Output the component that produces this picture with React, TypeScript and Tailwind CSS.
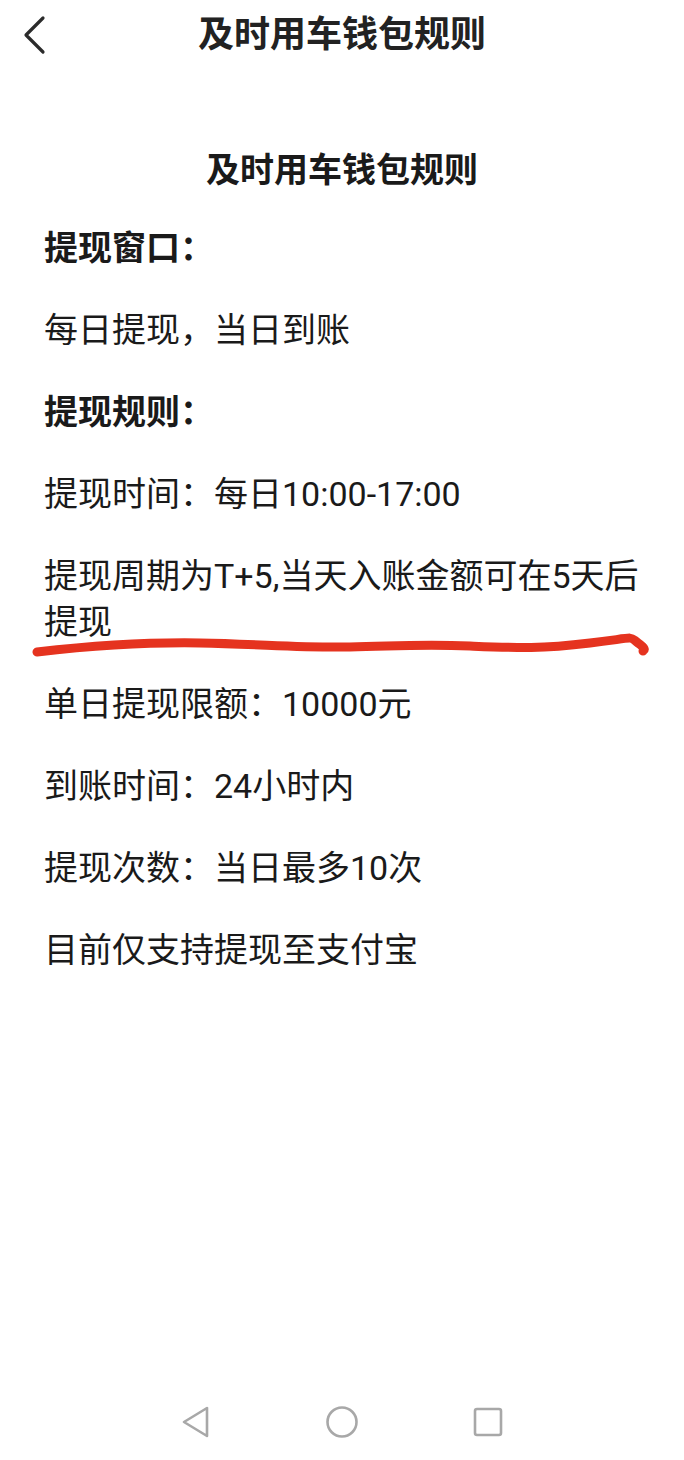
import React from 'react';

const FONT = { fontFamily: 'Roboto, "Noto Sans CJK SC", "Noto Sans", sans-serif' };

type Rule = { text: string; bold?: boolean; marked?: boolean };

const RULES: Rule[] = [
  { text: '提现窗口：', bold: true },
  { text: '每日提现，当日到账' },
  { text: '提现规则：', bold: true },
  { text: '提现时间：每日10:00-17:00' },
  { text: '提现周期为T+5,当天入账金额可在5天后提现', marked: true },
  { text: '单日提现限额：10000元' },
  { text: '到账时间：24小时内' },
  { text: '提现次数：当日最多10次' },
  { text: '目前仅支持提现至支付宝' },
];

// hand-drawn red underline, coords are page coords
const Scribble: React.FC = () => (
  <svg
    className="absolute left-[-44px] top-[75px] w-[684px] h-[34px] pointer-events-none"
    viewBox="0 628 684 34"
    fill="none"
  >
    <path
      d="M37 652 C 90 646, 140 642, 200 643 S 300 648, 350 647 S 420 644, 470 646 S 540 649, 590 643 S 628 636, 638 643 S 643 650, 643 651"
      stroke="#e5331f"
      strokeWidth="9"
      strokeLinecap="round"
      strokeLinejoin="round"
    />
  </svg>
);

const App: React.FC = () => {
  return (
    <div className="w-[684px] h-[1460px] bg-white flex flex-col text-[#1a1a1a]" style={FONT}>
      {/* header */}
      <div className="h-[70px] grid grid-cols-[1fr_auto_1fr] items-center">
        <div className="pl-[22px] flex items-center">
          <svg width="26" height="40" viewBox="0 0 26 40" fill="none">
            <path d="M21 3 L4 20 L21 37" stroke="#2b2b2b" strokeWidth="3.2" strokeLinecap="round" strokeLinejoin="round" />
          </svg>
        </div>
        <h1 className="text-[36px] font-bold leading-[46px] text-[#222]">及时用车钱包规则</h1>
        <div />
      </div>

      {/* content */}
      <div className="flex-1 pl-[44px] pr-[40px] pt-[77px]">
        <h2 className="text-center text-[34px] font-bold leading-[46px] mb-[32px] -ml-[4px]">及时用车钱包规则</h2>
        <div className="flex flex-col gap-[36px]">
          {RULES.map((r, i) => (
            <div key={i} className="relative">
              <p className={`text-[34px] leading-[46px] ${r.bold ? 'font-bold' : 'font-normal'}`}>{r.text}</p>
              {r.marked && <Scribble />}
            </div>
          ))}
        </div>
      </div>

      {/* android nav bar */}
      <div className="h-[76px] flex items-center justify-center">
        <div className="w-[322px] flex items-center justify-between">
          <svg width="30" height="36" viewBox="0 0 30 36" fill="none">
            <path d="M3 18 L26 4 L26 32 Z" stroke="#a8a8a8" strokeWidth="2.6" strokeLinejoin="round" />
          </svg>
          <svg width="34" height="34" viewBox="0 0 34 34" fill="none">
            <circle cx="17" cy="17" r="14.5" stroke="#a8a8a8" strokeWidth="2.6" />
          </svg>
          <svg width="30" height="30" viewBox="0 0 30 30" fill="none">
            <rect x="2" y="2" width="26" height="26" rx="2" stroke="#a8a8a8" strokeWidth="2.6" />
          </svg>
        </div>
      </div>
    </div>
  );
};

export default App;
